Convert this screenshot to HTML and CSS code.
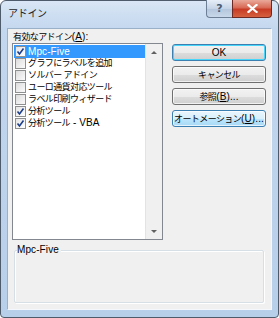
FILE: index.html
```html
<!DOCTYPE html>
<html lang="ja">
<head>
<meta charset="utf-8">
<link rel="stylesheet" href="styles.css">
</head>
<body>
<div class="window">
  <div class="titlebar">
    <span class="title">アドイン</span>
    <div class="caption-btns">
      <div class="cbtn help">?</div>
      <div class="cbtn close">
        <svg width="11" height="9" viewBox="0 0 11 9"><path d="M1.5 1 L9.5 8 M9.5 1 L1.5 8" stroke="#fff" stroke-width="2.2" stroke-linecap="square"/></svg>
      </div>
    </div>
  </div>
  <div class="client">
    <div class="main">
      <div class="left">
        <div class="label">有効なアドイン<span class="lat">(<u>A</u>):</span></div>
        <div class="listbox">
          <ul class="items">
            <li class="item selected"><span class="cb checked"><svg width="9" height="9" viewBox="0 0 9 9"><path d="M1.5 4.5 L3.5 7 L7.5 1.5" fill="none" stroke="#1c3e8a" stroke-width="1.6"/></svg></span><span class="txt lat">Mpc-Five</span></li>
            <li class="item"><span class="cb"></span><span class="txt">グラフにラベルを追加</span></li>
            <li class="item"><span class="cb"></span><span class="txt">ソルバー アドイン</span></li>
            <li class="item"><span class="cb"></span><span class="txt">ユーロ通貨対応ツール</span></li>
            <li class="item"><span class="cb"></span><span class="txt">ラベル印刷ウィザード</span></li>
            <li class="item"><span class="cb checked"><svg width="9" height="9" viewBox="0 0 9 9"><path d="M1.5 4.5 L3.5 7 L7.5 1.5" fill="none" stroke="#1c3e8a" stroke-width="1.6"/></svg></span><span class="txt">分析ツール</span></li>
            <li class="item"><span class="cb checked"><svg width="9" height="9" viewBox="0 0 9 9"><path d="M1.5 4.5 L3.5 7 L7.5 1.5" fill="none" stroke="#1c3e8a" stroke-width="1.6"/></svg></span><span class="txt">分析ツール<span class="lat"> - VBA</span></span></li>
          </ul>
          <div class="scrollbar">
            <span class="arrow up"></span>
            <span class="arrow down"></span>
          </div>
        </div>
      </div>
      <div class="buttons">
        <div class="btn default"><span class="lat">OK</span></div>
        <div class="btn">キャンセル</div>
        <div class="btn"><span>参照<span class="lat">(<u>B</u>)...</span></span></div>
        <div class="btn hover"><span>オートメーション<span class="lat">(<u>U</u>)...</span></span></div>
      </div>
    </div>
    <div class="desc"><span class="desc-title lat">Mpc-Five</span></div>
  </div>
</div>
</body>
</html>
```

FILE: styles.css
```css
* { box-sizing: border-box; }
html, body { margin: 0; padding: 0; }
body {
  width: 279px;
  height: 318px;
  overflow: hidden;
  background: #fff;
  font-family: "Liberation Sans", "Noto Sans CJK JP", sans-serif;
  font-size: 9px;
  font-weight: 400;
  letter-spacing: -0.6px;
  color: #000;
}
.lat {
  letter-spacing: 0.1px;
  font-family: "Liberation Sans", "Noto Sans CJK JP", sans-serif;
  font-size: 10px;
}
.window {
  width: 279px;
  height: 318px;
  display: flex;
  flex-direction: column;
  background: linear-gradient(#d9e6f5 0px, #c3d7ee 28px, #b8cfea 100%);
  border: 1px solid #4d5b6b;
  border-radius: 6px 6px 4px 4px;
  padding: 0 6px 7px 6px;
}
.titlebar {
  height: 27px;
  display: flex;
  align-items: flex-start;
  justify-content: space-between;
}
.title {
  margin-top: 6px;
  margin-left: 1px;
  font-size: 10px;
  line-height: 14px;
  letter-spacing: -0.3px;
  color: #1e1e1e;
}
.caption-btns {
  display: flex;
  margin-top: -1px;
}
.cbtn {
  height: 18px;
  display: flex;
  align-items: center;
  justify-content: center;
  border: 1px solid #6d7f95;
  border-top: none;
}
.help {
  width: 26px;
  border-radius: 0 0 0 4px;
  border-right: none;
  background: linear-gradient(#e6eef8, #c5d4e6 50%, #b3c5dc 51%, #c9d8ea);
  color: #4a5d75;
  font-family: "DejaVu Sans", sans-serif;
  font-weight: bold;
  font-size: 11px;
  letter-spacing: 0;
}
.close {
  width: 40px;
  border-radius: 0 0 4px 0;
  border-color: #6e2a22;
  background: linear-gradient(#e9a99a, #d86a55 45%, #c73c24 55%, #d5613f);
}
.client {
  flex: 1;
  display: flex;
  flex-direction: column;
  background: #f0f0f0;
  border: 1px solid #9aafc8;
  border-bottom-color: #f4f7fb;
  border-right-color: #f4f7fb;
  padding: 2px 5px 0 4px;
}
.main {
  display: flex;
  gap: 9px;
}
.left {
  display: flex;
  flex-direction: column;
}
.label {
  height: 12px;
  line-height: 12px;
  padding-left: 1px;
  white-space: nowrap;
}
.listbox {
  width: 151px;
  height: 197px;
  display: flex;
  border: 1px solid #828790;
  background: #fff;
}
.items {
  flex: 1;
  list-style: none;
  margin: 0;
  padding: 1px 0 0 1px;
}
.item {
  height: 12px;
  display: flex;
  align-items: center;
  line-height: 12px;
  white-space: nowrap;
  padding-left: 1px;
}
.txt { white-space: pre; }
.item.selected {
  background: #3399ff;
  color: #fff;
  height: 13px;
  margin-bottom: -1px;
}
.cb {
  width: 11px;
  height: 11px;
  margin-right: 2px;
  border: 1px solid #8e8f8f;
  background: linear-gradient(135deg, #dcdcdc, #fbfbfb);
  display: flex;
  align-items: center;
  justify-content: center;
  flex: none;
}
.cb.checked {
  background: linear-gradient(135deg, #e4e4e4, #ffffff);
}
.scrollbar {
  width: 17px;
  background: #f0f0f0;
  border-left: 1px solid #e3e3e3;
  display: flex;
  flex-direction: column;
  justify-content: space-between;
  align-items: center;
  padding: 7px 0 6px 0;
}
.arrow {
  width: 0;
  height: 0;
  border-left: 3px solid transparent;
  border-right: 3px solid transparent;
}
.arrow.up { border-bottom: 3px solid #606060; }
.arrow.down { border-top: 3px solid #606060; }
.buttons {
  display: flex;
  flex-direction: column;
  gap: 5px;
  margin-top: 13px;
}
.btn {
  width: 94px;
  height: 17px;
  border: 1px solid #707070;
  border-radius: 3px;
  background: linear-gradient(#f2f2f2 0%, #ebebeb 50%, #dddddd 51%, #cfcfcf 100%);
  box-shadow: inset 0 0 0 1px rgba(255,255,255,0.7);
  display: flex;
  align-items: center;
  justify-content: center;
  line-height: 12px;
  white-space: nowrap;
}
.btn.default {
  border-color: #3c7fb1;
  box-shadow: inset 0 0 0 1px #48d6fb;
}
.btn.hover {
  border-color: #3c7fb1;
  background: linear-gradient(#eaf6fd 0%, #d9f0fc 50%, #bee6fd 51%, #a7d9f5 100%);
}
.desc {
  flex: 1;
  margin: 10px 2px 6px 2px;
  padding-left: 2px;
  border: 1px solid #d5dfe5;
  box-shadow: 1px 1px 0 #fff, inset 1px 1px 0 #fff;
  border-radius: 2px;
  line-height: 12px;
}
.desc-title {
  display: inline-block;
  margin-top: -7px;
  padding-right: 2px;
  background: #f0f0f0;
  vertical-align: top;
}
u { text-decoration: underline; }
```
